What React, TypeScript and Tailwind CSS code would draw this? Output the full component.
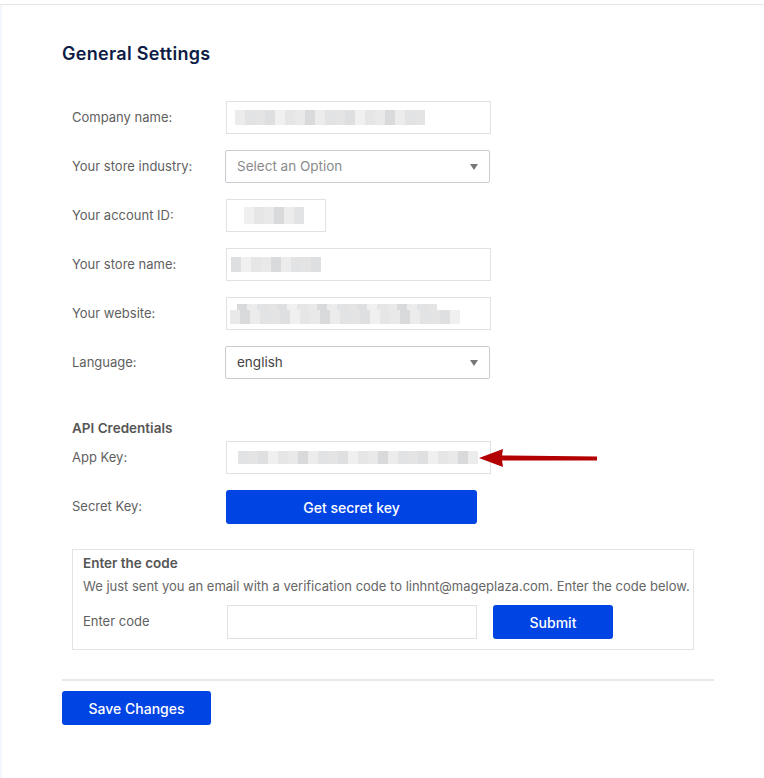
import React from "react";

// Redacted values are shown as rows of soft gray cells
const Blur = ({ cells, h = 15 }: { cells: string[]; h?: number }) => (
  <div className="flex" style={{ height: h }}>
    {cells.map((c, i) => (
      <div key={i} className="w-[10px] h-full" style={{ background: c }} />
    ))}
  </div>
);

const shades = (n: number, seed: number) => {
  const pal = ["#e6e6e6", "#ececec", "#dedfe0", "#e9e9e9", "#e2e3e4", "#f0f0f0", "#d9dadb", "#e4e4e4"];
  return Array.from({ length: n }, (_, i) => pal[(i * 3 + seed) % pal.length]);
};

const Label = ({ children }: { children: React.ReactNode }) => (
  <span className="w-[154px] shrink-0 text-[13px] text-[#5f5f5f]">{children}</span>
);

const TextBox = ({ w = "w-[265px]", children }: { w?: string; children?: React.ReactNode }) => (
  <div className={`${w} h-[33px] border border-[#e1e1e1] bg-white flex items-center`}>{children}</div>
);

const Select = ({ value, muted }: { value: string; muted?: boolean }) => (
  <div className="-ml-px w-[265px] h-[33px] border border-[#c9ccd1] rounded-[2px] bg-white flex items-center justify-between pl-[11px] pr-[11px]">
    <span className={`text-[13.5px] ${muted ? "text-[#8a8a8a]" : "text-[#444]"}`}>{value}</span>
    <span className="w-0 h-0 border-l-[4px] border-r-[4px] border-t-[6px] border-l-transparent border-r-transparent border-t-[#777]" />
  </div>
);

export default function App() {
  return (
    <div className="w-[764px] h-[778px] bg-white pt-1 font-['Inter','Liberation_Sans',sans-serif]">
      <div className="flex h-full border-t border-[#e4e4e4]">
        <div className="w-[2px] bg-[#f3f6fc]" />
        <div className="flex-1 pl-[60px] pt-[36px]">
          <h2 className="h-[26px] leading-[26px] text-[18px] tracking-[0.3px] font-semibold text-[#0d1b45]">General Settings</h2>

          <div className="mt-[34px] pl-[10px] flex flex-col gap-4">
            <div className="flex items-center">
              <Label>Company name:</Label>
              <TextBox>
                <div className="ml-[8px]"><Blur cells={shades(19, 1)} /></div>
              </TextBox>
            </div>
            <div className="flex items-center">
              <Label>Your store industry:</Label>
              <Select value="Select an Option" muted />
            </div>
            <div className="flex items-center">
              <Label>Your account ID:</Label>
              <TextBox w="w-[100px]">
                <div className="ml-[17px]"><Blur cells={shades(6, 5)} h={17} /></div>
              </TextBox>
            </div>
            <div className="flex items-center">
              <Label>Your store name:</Label>
              <TextBox>
                <div className="ml-[4px]"><Blur cells={shades(9, 2)} /></div>
              </TextBox>
            </div>
            <div className="flex items-center">
              <Label>Your website:</Label>
              <TextBox>
                <div className="ml-[3px] flex flex-col">
                  <div className="ml-[7px]"><Blur cells={shades(20, 6)} h={6} /></div>
                  <Blur cells={shades(23, 3)} h={14} />
                </div>
              </TextBox>
            </div>
            <div className="flex items-center">
              <Label>Language:</Label>
              <Select value="english" />
            </div>
          </div>

          <div className="mt-[39px] pl-[10px]">
            <div className="h-5 leading-5 text-[13.5px] font-semibold text-[#555]">API Credentials</div>
            <div className="mt-[3px] flex items-center relative">
              <Label>App Key:</Label>
              <TextBox>
                <div className="ml-[11px]"><Blur cells={shades(24, 4)} h={13} /></div>
              </TextBox>
              {/* red pointer */}
              <svg className="absolute left-[405px] top-[6px]" width="122" height="22" viewBox="0 0 122 22">
                <path d="M2 11 L26 2 L25 8.5 L120 9.5 L120 13.5 L25 13.5 L26 20 Z" fill="#b30000" />
              </svg>
            </div>
            <div className="mt-4 flex items-center">
              <Label>Secret Key:</Label>
              <button className="w-[251px] h-[34px] rounded-[3px] bg-[#0044e4] text-white text-[14px] font-medium">
                Get secret key
              </button>
            </div>
          </div>

          <div className="mt-[25px] ml-[10px] w-[622px] border border-[#e3e3e3] pl-[10px] pt-[3px] pb-[10px]">
            <div className="h-5 leading-5 text-[13.5px] font-semibold text-[#555]">Enter the code</div>
            <div className="mt-[3px] h-5 leading-5 text-[13px] text-[#666]">
              We just sent you an email with a verification code to linhnt@mageplaza.com. Enter the code below.
            </div>
            <div className="mt-[9px] flex items-center">
              <span className="w-[144px] shrink-0 text-[13px] text-[#5f5f5f]">Enter code</span>
              <div className="w-[250px] h-[34px] border border-[#e1e1e1]" />
              <button className="ml-4 w-[120px] h-[34px] rounded-[3px] bg-[#0044e4] text-white text-[14px] font-medium">
                Submit
              </button>
            </div>
          </div>

          <div className="mt-[29px] w-[652px] border-t-2 border-[#e6e9ee]" />
          <button className="mt-[10px] w-[149px] h-[34px] rounded-[3px] bg-[#0044e4] text-white text-[14px] font-medium">
            Save Changes
          </button>
        </div>
      </div>
    </div>
  );
}
